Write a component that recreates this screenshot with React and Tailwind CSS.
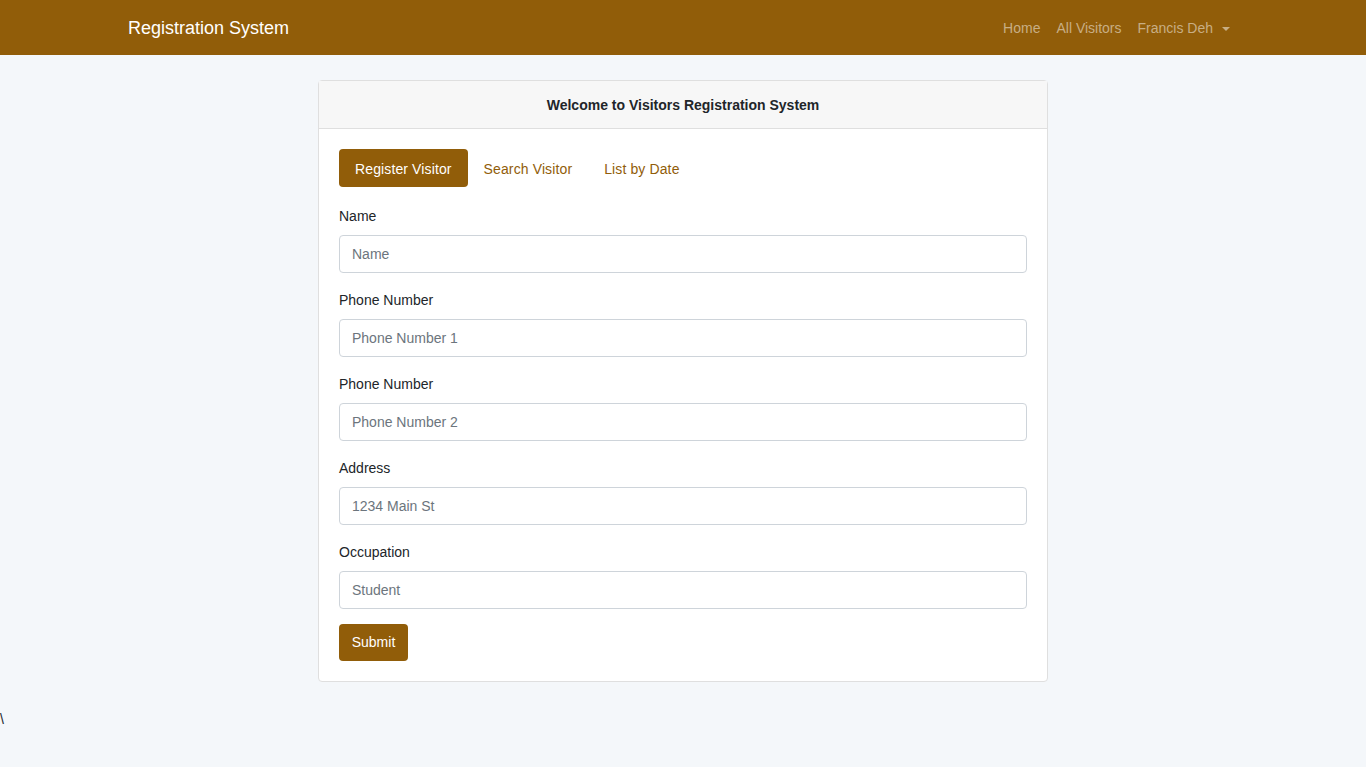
import React, { useState } from 'react';

const fields = [
    { label: 'Name', placeholder: 'Name' },
    { label: 'Phone Number', placeholder: 'Phone Number 1' },
    { label: 'Phone Number', placeholder: 'Phone Number 2' },
    { label: 'Address', placeholder: '1234 Main St' },
    { label: 'Occupation', placeholder: 'Student' },
];

const tabs = ['Register Visitor', 'Search Visitor', 'List by Date'];

function App() {
    const [activeTab, setActiveTab] = useState('Register Visitor');

    return (
        <div className="min-h-screen bg-[#f4f7fa] font-['Liberation_Sans',Arial,sans-serif] text-[14px] text-[#212529]">
            <nav className="h-[55px] bg-[#915d09]">
                <div className="w-[1110px] h-full mx-auto flex items-center justify-between pt-[2px]">
                    <a className="text-[18px] text-white leading-[27px]">Registration System</a>
                    <ul className="flex items-center">
                        <li><a className="block px-2 py-2 text-[#c8ae84]">Home</a></li>
                        <li><a className="block px-2 py-2 text-[#c8ae84]">All Visitors</a></li>
                        <li>
                            <a className="flex items-center px-2 py-2 text-[#c8ae84]">
                                Francis Deh
                                <span className="ml-[9px] w-0 h-0 border-x-[4px] border-x-transparent border-t-[4px] border-t-[#c8ae84]"></span>
                            </a>
                        </li>
                    </ul>
                </div>
            </nav>

            <div className="w-[730px] mx-auto mt-[25px] bg-white border border-[#dfdfdf] rounded">
                <div className="h-[48px] pt-[2px] bg-[#f7f7f7] border-b border-[#dfdfdf] flex items-center justify-center font-bold">
                    Welcome to Visitors Registration System
                </div>
                <div className="p-5">
                    <div className="flex mb-[18px]">
                        {tabs.map((tab) => (
                            <button
                                key={tab}
                                type="button"
                                onClick={() => setActiveTab(tab)}
                                className={`h-[38px] pt-[2px] px-4 rounded tracking-[0.12px] ${activeTab === tab ? 'bg-[#915d09] text-white' : 'text-[#915d09]'}`}
                            >
                                {tab}
                            </button>
                        ))}
                    </div>
                    <form onSubmit={(e) => e.preventDefault()}>
                        {fields.map((f, i) => (
                            <div key={i} className="mb-4">
                                <label className="block leading-[22px] mb-2">{f.label}</label>
                                <input
                                    type="text"
                                    placeholder={f.placeholder}
                                    className="w-full h-[38px] px-3 border border-[#ced4da] rounded bg-white placeholder:text-[#6c757d] outline-none"
                                />
                            </div>
                        ))}
                        <button type="submit" className="-mt-[1px] h-[37px] w-[69px] rounded bg-[#915d09] text-white">
                            Submit
                        </button>
                    </form>
                </div>
            </div>
            <div className="mt-[27px] leading-[21px]">\</div>
        </div>
    );
}

export default App;
